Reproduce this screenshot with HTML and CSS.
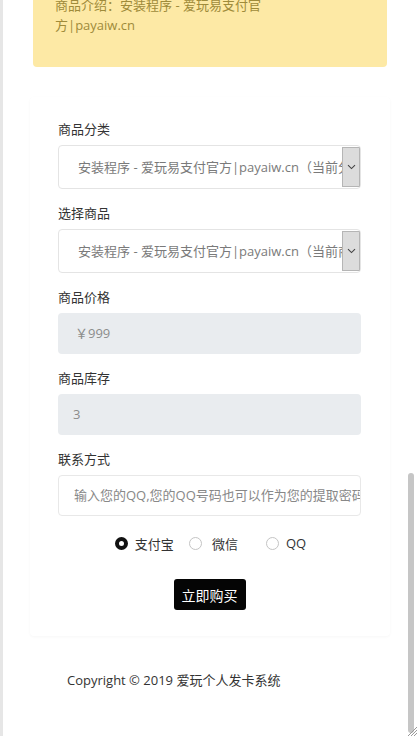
FILE: index.html
```html
<!DOCTYPE html>
<html lang="zh-CN">
<head>
<meta charset="utf-8">
<title>爱玩个人发卡系统</title>
<link rel="stylesheet" href="styles.css">
</head>
<body>
<div class="frame">
  <div class="page">
    <div class="alert">
      <p class="alert-text">商品介绍：安装程序 - 爱玩易支付官方|payaiw.cn</p>
    </div>

    <div class="card">
      <div class="group">
        <div class="label">商品分类</div>
        <div class="select">
          <span class="select-text">安装程序 - 爱玩易支付官方|payaiw.cn（当前分类）</span>
          <span class="select-btn"><svg width="9" height="6" viewBox="0 0 9 6"><path d="M1 1.2 L4.5 4.6 L8 1.2" fill="none" stroke="#444" stroke-width="1.1"/></svg></span>
        </div>
      </div>
      <div class="group">
        <div class="label">选择商品</div>
        <div class="select">
          <span class="select-text">安装程序 - 爱玩易支付官方|payaiw.cn（当前商品）</span>
          <span class="select-btn"><svg width="9" height="6" viewBox="0 0 9 6"><path d="M1 1.2 L4.5 4.6 L8 1.2" fill="none" stroke="#444" stroke-width="1.1"/></svg></span>
        </div>
      </div>
      <div class="group">
        <div class="label">商品价格</div>
        <div class="input disabled price">￥999</div>
      </div>
      <div class="group">
        <div class="label">商品库存</div>
        <div class="input disabled">3</div>
      </div>
      <div class="group">
        <div class="label">联系方式</div>
        <div class="input placeholder">输入您的QQ,您的QQ号码也可以作为您的提取密码</div>
      </div>

      <div class="pay">
        <label class="opt opt1"><span class="radio checked"></span><span class="opt-text">支付宝</span></label>
        <label class="opt opt2"><span class="radio"></span><span class="opt-text wx">微信</span></label>
        <label class="opt"><span class="radio"></span><span class="opt-text">QQ</span></label>
      </div>

      <div class="actions">
        <button class="buy">立即购买</button>
      </div>
    </div>

    <div class="footer">Copyright © 2019 爱玩个人发卡系统</div>
  </div>

  <div class="scrollbar"></div>
  <svg class="grip" width="12" height="12" viewBox="0 0 12 12">
    <path d="M12 3 L3 12 M12 6 L6 12 M12 9 L9 12" stroke="#999" stroke-width="1"/>
  </svg>
</div>
</body>
</html>
```

FILE: styles.css
```css
html, body {
  margin: 0;
  padding: 0;
  background: #ffffff;
}

body {
  width: 417px;
  height: 736px;
  overflow: hidden;
  font-family: "Open Sans", "Noto Sans CJK SC", sans-serif;
  font-size: 13px;
  color: #333;
}

.frame {
  position: relative;
  height: 736px;
  border-left: 3px solid #e6e6e6;
  box-sizing: border-box;
  overflow: hidden;
}

.page {
  padding: 0 27px 0 27px;
  width: 360px;
  margin-top: -25px;
}

.alert {
  background: #fde9a5;
  border-radius: 4px;
  margin-left: 3px;
  width: 354px;
  padding: 20px 0 32px 22px;
  box-sizing: border-box;
}

.alert-text {
  margin: 0;
  width: 212px;
  line-height: 20px;
  color: #9f8b3a;
}

.card {
  margin-top: 30px;
  padding: 22px 29px 26px 28px;
  background: #fff;
  box-shadow: 0 1px 3px rgba(0, 0, 0, 0.035);
  border-radius: 4px;
}

.group {
  margin-bottom: 14px;
}

.label {
  line-height: 20px;
  margin-bottom: 6px;
  color: #333;
}

.select {
  display: flex;
  align-items: stretch;
  height: 44px;
  border: 1px solid #e4e4e4;
  border-radius: 4px;
  box-sizing: border-box;
  overflow: hidden;
  background: #fff;
}

.select-text {
  flex: 1;
  min-width: 0;
  white-space: nowrap;
  overflow: hidden;
  padding-left: 19px;
  line-height: 42px;
  color: #7a7a7a;
}

.select-btn {
  width: 16px;
  flex: none;
  margin: 1px 0;
  background: #dcdcdc;
  border: 1px solid #b5b5b5;
  display: flex;
  align-items: center;
  justify-content: center;
}

.input {
  height: 41px;
  line-height: 41px;
  border-radius: 4px;
  padding-left: 15px;
  box-sizing: border-box;
  white-space: nowrap;
  overflow: hidden;
}

.input.disabled {
  background: #e9ecef;
  color: #8c8c8c;
}

.input.price {
  padding-left: 17px;
}

.input.placeholder {
  border: 1px solid #e8e8e8;
  color: #888;
  line-height: 39px;
}

.pay {
  display: flex;
  justify-content: center;
  align-items: center;
  height: 20px;
  margin-top: 17px;
  padding-left: 2px;
}

.opt {
  display: flex;
  align-items: center;
  color: #333;
}

.opt1 { margin-right: 15px; }
.opt2 { margin-right: 28px; }

.radio {
  width: 13px;
  height: 13px;
  box-sizing: border-box;
  border: 1px solid #c4c4c4;
  border-radius: 50%;
  background: #fff;
  margin-right: 7px;
}

.radio.checked {
  border: 4px solid #111;
}

.opt-text.wx {
  margin-left: 3px;
}

.actions {
  display: flex;
  justify-content: center;
  margin-top: 26px;
}

.buy {
  width: 72px;
  height: 31px;
  border: none;
  border-radius: 3px;
  background: #050505;
  color: #fff;
  font-family: inherit;
  font-size: 14px;
  padding: 0;
}

.footer {
  margin-top: 35px;
  padding-left: 37px;
  line-height: 18px;
  color: #333;
}

.scrollbar {
  position: absolute;
  right: 3px;
  top: 473px;
  width: 6px;
  height: 260px;
  border-radius: 3px;
  background: #c6c6c6;
}

.grip {
  position: absolute;
  right: 0;
  bottom: 0;
}
```
